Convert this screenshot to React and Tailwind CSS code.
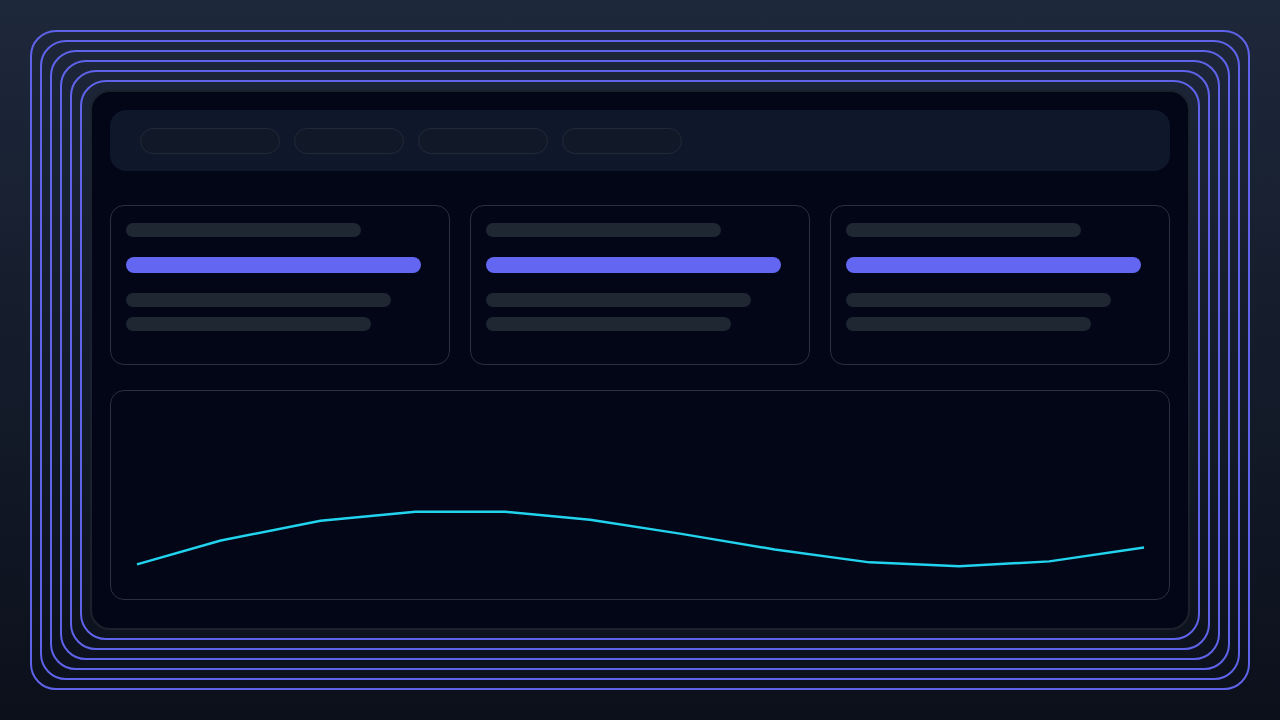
import React from 'react';

const PILLS = [140, 110, 130, 120];

const CARDS = [0, 1, 2];

// chart points relative to the chart card (card origin at 110,390)
const POINTS = [
  [136, 565], [220, 541], [320, 521], [415, 512], [505, 512], [590, 520],
  [680, 534], [775, 550], [870, 563], [960, 567], [1050, 562], [1145, 548],
].map(([x, y]) => `${x - 110},${y - 390}`).join(' ');

function Ring({ children, outer }) {
  return (
    <div
      className={
        outer
          ? 'flex h-[660px] w-[1220px] rounded-[26px] border-2 border-[#5f63ea] p-[8px]'
          : 'flex flex-1 rounded-[26px] border-2 border-[#5f63ea] p-[8px]'
      }
    >
      {children}
    </div>
  );
}

function StatCard() {
  return (
    <div className="flex h-[160px] flex-col rounded-[14px] border border-[#29313e] bg-[#020617] px-[15px] pt-[17px]">
      <div className="h-[14px] w-[235px] rounded-full bg-[#1f2733]" />
      <div className="mt-[20px] h-[16px] w-[295px] rounded-full bg-[#6366f1]" />
      <div className="mt-[20px] h-[14px] w-[265px] rounded-full bg-[#1f2733]" />
      <div className="mt-[10px] h-[14px] w-[245px] rounded-full bg-[#1f2733]" />
    </div>
  );
}

export default function App() {
  return (
    <div className="h-[720px] w-[1280px] overflow-hidden bg-gradient-to-b from-[#1e283b] to-[#0b101b] p-[30px]">
      <Ring outer>
        <Ring>
          <Ring>
            <Ring>
              <Ring>
                <Ring>
                  <div className="flex flex-1 flex-col rounded-[20px] border-2 border-[#1c222d] bg-[#020617] px-[18px] pt-[18px]">
                    <div className="flex h-[61px] items-center gap-[14px] rounded-2xl bg-[#0f172a] px-[30px]">
                      {PILLS.map((w, i) => (
                        <div
                          key={i}
                          className="h-[26px] rounded-full border border-[#222a39] bg-[#111827]"
                          style={{ width: w }}
                        />
                      ))}
                    </div>

                    <div className="mt-[34px] grid grid-cols-3 gap-[20px]">
                      {CARDS.map((i) => (
                        <StatCard key={i} />
                      ))}
                    </div>

                    <div className="mt-[25px] h-[210px] rounded-[14px] border border-[#29313e] bg-[#020617]">
                      <svg className="block h-full w-full" viewBox="0 0 1060 210" preserveAspectRatio="none">
                        <polyline
                          points={POINTS}
                          fill="none"
                          stroke="#22d3ee"
                          strokeWidth="2.5"
                          strokeLinejoin="round"
                        />
                      </svg>
                    </div>
                  </div>
                </Ring>
              </Ring>
            </Ring>
          </Ring>
        </Ring>
      </Ring>
    </div>
  );
}
